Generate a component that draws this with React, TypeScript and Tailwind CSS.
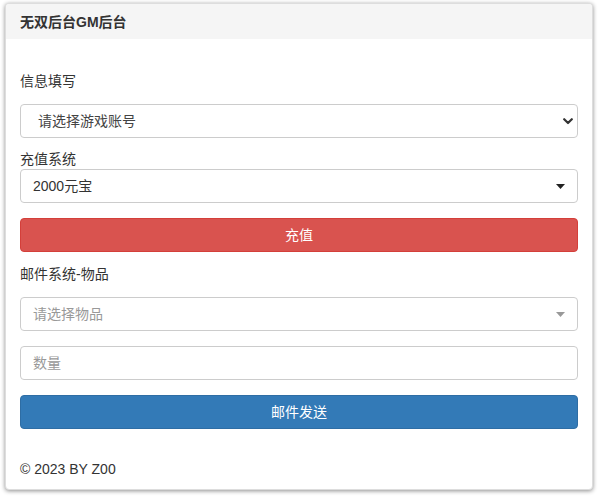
import React from "react";

function Caret({ color }: { color: string }) {
  return (
    <svg width="9" height="5" viewBox="0 0 9 5" className="shrink-0">
      <path d="M0 0 L9 0 L4.5 5 Z" fill={color} />
    </svg>
  );
}

function Chevron() {
  return (
    <svg width="10" height="7" viewBox="0 0 10 7" className="shrink-0">
      <path d="M1.2 1.2 L5 5 L8.8 1.2" fill="none" stroke="#333" strokeWidth="2.2" strokeLinecap="round" strokeLinejoin="round" />
    </svg>
  );
}

export default function App() {
  return (
    <div className="w-[601px] h-[497px] bg-white pt-[3px] pl-[5px] text-[14px] text-[#333]" style={{ fontFamily: '"Liberation Sans", "Noto Sans CJK SC", sans-serif' }}>
      <div className="w-[588px] h-[487px] rounded-[4px] border border-[#ddd] bg-white shadow-[0_1px_4px_rgba(0,0,0,0.45)] flex flex-col overflow-hidden">
        {/* 标题 */}
        <div className="h-[35px] bg-[#f5f5f5] px-[14px] pt-[1px] flex items-center text-[14px] font-bold text-[#333]">
          无双后台GM后台
        </div>

        <div className="px-[14px] pt-[32px] flex flex-col">
          <div className="leading-[20px]">信息填写</div>

          <div className="mt-[13px] h-[34px] rounded-[4px] border border-[#ccc] flex items-center justify-between pl-[17px] pr-[4px] text-[#444]">
            <span>请选择游戏账号</span>
            <Chevron />
          </div>

          <div className="mt-[11px] leading-[20px]">充值系统</div>
          <div className="h-[34px] rounded-[4px] border border-[#ccc] flex items-center justify-between pl-[12px] pr-[12px] text-[#333]">
            <span>2000元宝</span>
            <Caret color="#222" />
          </div>

          <button className="mt-[15px] h-[34px] rounded-[4px] bg-[#d9534f] border border-[#d43f3a] text-white">
            充值
          </button>

          <div className="mt-[12px] leading-[20px]">邮件系统-物品</div>
          <div className="mt-[13px] h-[34px] rounded-[4px] border border-[#ccc] flex items-center justify-between pl-[12px] pr-[12px] text-[#999]">
            <span>请选择物品</span>
            <Caret color="#999" />
          </div>

          <div className="mt-[15px] h-[34px] rounded-[4px] border border-[#ccc] flex items-center pl-[12px] text-[#999]">
            数量
          </div>

          <button className="mt-[15px] h-[34px] rounded-[4px] bg-[#337ab7] border border-[#2e6da4] text-white">
            邮件发送
          </button>

          <div className="mt-[30px] leading-[20px] text-[#333]">© 2023 BY Z00</div>
        </div>
      </div>
    </div>
  );
}
